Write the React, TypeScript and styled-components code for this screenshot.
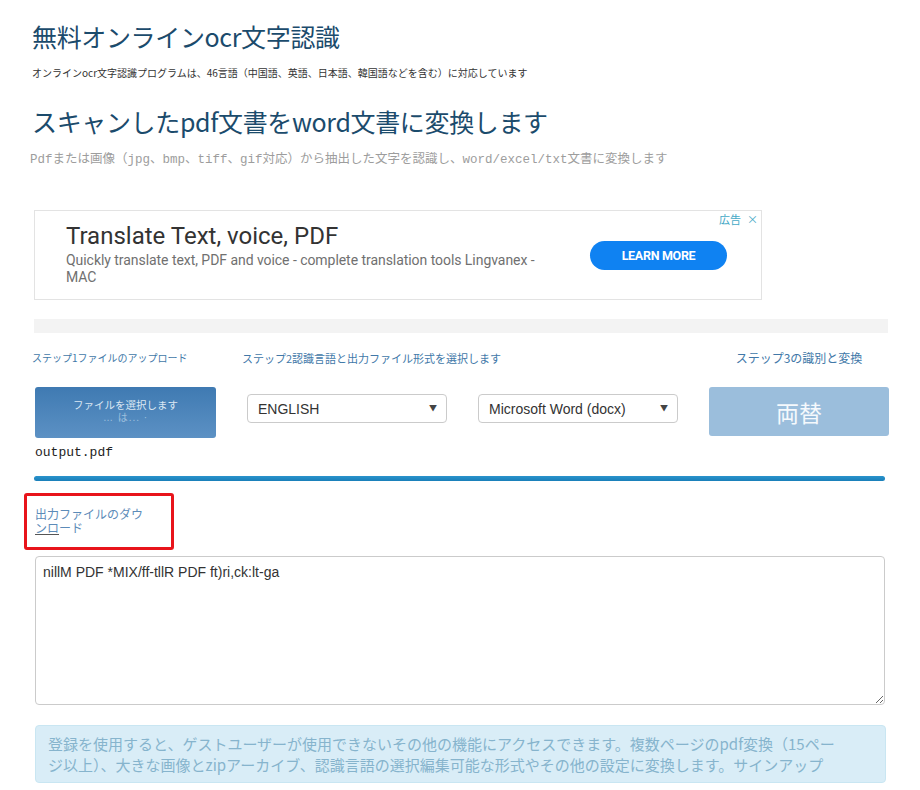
import React from "react";
import styled, { createGlobalStyle } from "styled-components";

const GlobalStyle = createGlobalStyle`
  html, body { margin: 0; padding: 0; background: #fff; }
  body { font-family: "Noto Sans CJK JP", "Noto Sans", sans-serif; color: #333; }
  * { box-sizing: border-box; }
`;

const JP = `"Noto Sans CJK JP", "Noto Sans", sans-serif`;
const TIGHT = `"Liberation Sans", "Noto Sans CJK JP", sans-serif`;

const Page = styled.div`
  width: 920px;
  padding: 22px 32px 0 34px;
  display: flex;
  flex-direction: column;
  align-items: flex-start;
`;

const Title = styled.h1<{ $gap: number }>`
  margin: ${(p) => p.$gap}px 0 0 -2px;
  font-family: ${JP};
  font-weight: 400;
  font-size: 25px;
  line-height: 28px;
  color: #1b4b6c;
  letter-spacing: -0.35px;
`;

const Lead = styled.p`
  margin: 16px 0 0 -2px;
  font-family: ${JP};
  font-size: 10px;
  line-height: 14px;
  color: #333;
`;

const Para = styled.p`
  margin: 16px 0 0 -4px;
  font-family: "Liberation Mono", ${JP};
  font-size: 12.5px;
  line-height: 18px;
  color: #9d9d9d;
`;

const Ad = styled.div`
  position: relative;
  margin-top: 41px;
  width: 728px;
  height: 90px;
  border: 1px solid #e3e3e3;
  display: flex;
  align-items: center;
  justify-content: space-between;
  padding: 0 34px 0 31px;
  background: #fff;
`;

const AdText = styled.div`
  display: flex;
  flex-direction: column;
  width: 480px;
  margin-top: -2px;
`;

const AdTitle = styled.div`
  font-family: Roboto, "Liberation Sans", sans-serif;
  font-size: 24px;
  line-height: 28px;
  color: #333;
`;

const AdDesc = styled.div`
  margin-top: 2px;
  font-family: Roboto, "Liberation Sans", sans-serif;
  font-size: 14px;
  line-height: 17px;
  color: #707070;
  letter-spacing: -0.05px;
`;

const AdButton = styled.button`
  width: 137px;
  height: 29px;
  border: none;
  border-radius: 15px;
  background: #0f82f2;
  color: #fff;
  font-family: Roboto, "Liberation Sans", sans-serif;
  font-weight: 700;
  font-size: 12.5px;
  letter-spacing: -0.3px;
  cursor: pointer;
`;

const AdBadge = styled.div`
  position: absolute;
  top: 1px;
  right: 3px;
  display: flex;
  gap: 6px;
  font-family: ${JP};
  font-size: 11px;
  line-height: 14px;
  color: #45a9c6;
`;

const GrayBar = styled.div`
  margin-top: 19px;
  width: 854px;
  height: 14px;
  background: #f3f3f3;
`;

const Steps = styled.div`
  width: 854px;
  display: grid;
  grid-template-columns: 182px 200px 200px 180px;
  column-gap: 31px;
  margin-top: 17px;
`;

const StepLabel = styled.div<{ $size: number; $col: string; $align?: string; $shift?: number }>`
  grid-column: ${(p) => p.$col};
  grid-row: 1;
  font-family: ${JP};
  font-size: ${(p) => p.$size}px;
  line-height: 16px;
  color: #4178a8;
  text-align: ${(p) => p.$align || "left"};
  margin-left: ${(p) => p.$shift || 0}px;
  white-space: nowrap;
`;

const Cell = styled.div<{ $col: number; $top: number }>`
  grid-column: ${(p) => p.$col};
  grid-row: 2;
  margin-top: ${(p) => p.$top}px;
`;

const FileButton = styled.div`
  width: 181px;
  height: 51px;
  margin-left: 1px;
  border-radius: 3px;
  background: linear-gradient(#3f7ab2, #5c91c4);
  display: flex;
  flex-direction: column;
  align-items: center;
  justify-content: center;
  padding-bottom: 3px;
  font-family: ${TIGHT};
  font-size: 10.5px;
  line-height: 13px;
  color: #dbe7f3;
`;

const FileSub = styled.span`
  color: #9fc0de;
  font-size: 10px;
  line-height: 12px;
  letter-spacing: 1px;
`;

const SelectWrap = styled.div`
  position: relative;
  width: 200px;
  height: 29px;
`;

const Select = styled.select`
  appearance: none;
  -webkit-appearance: none;
  width: 100%;
  height: 100%;
  border: 1px solid #cbcbcb;
  border-radius: 4px;
  background: #fff;
  padding: 0 24px 0 10px;
  font-family: "Liberation Sans", Arial, sans-serif;
  font-size: 14px;
  color: #333;
  outline: none;
`;

const Arrow = styled.span`
  position: absolute;
  right: 10px;
  top: 9px;
  font-size: 8px;
  line-height: 10px;
  color: #444;
  pointer-events: none;
`;

const ConvertButton = styled.button`
  width: 180px;
  height: 49px;
  border: none;
  border-radius: 3px;
  background: #9bbedc;
  color: #f5f9fd;
  font-family: ${JP};
  font-size: 23px;
  cursor: pointer;
`;

const FileName = styled.div`
  grid-column: 1 / span 2;
  grid-row: 3;
  margin: 7px 0 0 1px;
  font-family: "Liberation Mono", "Courier New", monospace;
  font-size: 13px;
  line-height: 16px;
  color: #222;
`;

const ProgressBar = styled.div`
  margin-top: 15px;
  width: 851px;
  height: 5px;
  border-radius: 3px;
  background: linear-gradient(#2a93cc, #1a7fb9);
`;

const Highlight = styled.div`
  margin: 12px 0 0 -10px;
  width: 150px;
  height: 57px;
  border: 3px solid #e8141b;
  border-radius: 3px;
  padding: 12px 0 0 8px;
`;

const DownloadLink = styled.a`
  display: block;
  width: 114px;
  font-family: ${TIGHT};
  font-size: 12px;
  line-height: 14px;
  color: #5c8bb8;
  text-decoration: none;
`;

const Focus = styled.span`
  text-decoration: underline;
  text-decoration-color: #555;
  text-underline-offset: 1px;
`;

const Output = styled.textarea`
  margin: 6px 0 0 1px;
  width: 850px;
  height: 149px;
  border: 1px solid #cbcbcb;
  border-radius: 4px;
  padding: 5px 7px;
  font-family: "Liberation Sans", Arial, sans-serif;
  font-size: 14px;
  line-height: 20px;
  color: #333;
  resize: both;
  outline: none;
`;

const Notice = styled.div`
  margin: 20px 0 0 1px;
  width: 851px;
  border: 1px solid #c9e6f2;
  border-radius: 4px;
  background: #d9edf7;
  padding: 7px 38px 7px 12px;
  font-family: ${JP};
  font-size: 15px;
  line-height: 21px;
  color: #86b4cd;
`;

export default function App() {
  return (
    <>
      <GlobalStyle />
      <Page>
        <Title $gap={0}>無料オンラインocr文字認識</Title>
        <Lead>
          オンラインocr文字認識プログラムは、46言語（中国語、英語、日本語、韓国語などを含む）に対応しています
        </Lead>
        <Title $gap={27}>スキャンしたpdf文書をword文書に変換します</Title>
        <Para>
          Pdfまたは画像（jpg、bmp、tiff、gif対応）から抽出した文字を認識し、word/excel/txt文書に変換します
        </Para>

        <Ad>
          <AdText>
            <AdTitle>Translate Text, voice, PDF</AdTitle>
            <AdDesc>
              Quickly translate text, PDF and voice - complete translation tools Lingvanex - MAC
            </AdDesc>
          </AdText>
          <AdButton>LEARN MORE</AdButton>
          <AdBadge>
            <span>広告</span>
            <span>×</span>
          </AdBadge>
        </Ad>

        <GrayBar />

        <Steps>
          <StepLabel $size={10} $col="1" $shift={-2}>
            ステップ1ファイルのアップロード
          </StepLabel>
          <StepLabel $size={11} $col="2 / span 2" $shift={-5}>
            ステップ2認識言語と出力ファイル形式を選択します
          </StepLabel>
          <StepLabel $size={12} $col="4" $align="center">
            ステップ3の識別と変換
          </StepLabel>

          <Cell $col={1} $top={21}>
            <FileButton>
              <span>ファイルを選択します</span>
              <FileSub>… は... ·</FileSub>
            </FileButton>
          </Cell>
          <Cell $col={2} $top={28}>
            <SelectWrap>
              <Select defaultValue="ENGLISH">
                <option>ENGLISH</option>
              </Select>
              <Arrow>▼</Arrow>
            </SelectWrap>
          </Cell>
          <Cell $col={3} $top={28}>
            <SelectWrap>
              <Select defaultValue="docx">
                <option value="docx">Microsoft Word (docx)</option>
              </Select>
              <Arrow>▼</Arrow>
            </SelectWrap>
          </Cell>
          <Cell $col={4} $top={21}>
            <ConvertButton>両替</ConvertButton>
          </Cell>

          <FileName>output.pdf</FileName>
        </Steps>

        <ProgressBar />

        <Highlight>
          <DownloadLink href="#">
            出力ファイルのダウ<Focus>ンロ</Focus>ード
          </DownloadLink>
        </Highlight>

        <Output defaultValue="nillM PDF *MIX/ff-tllR PDF ft)ri,ck:lt-ga" />

        <Notice>
          登録を使用すると、ゲストユーザーが使用できないその他の機能にアクセスできます。複数ページのpdf変換（15ページ以上）、大きな画像とzipアーカイブ、認識言語の選択編集可能な形式やその他の設定に変換します。サインアップ
        </Notice>
      </Page>
    </>
  );
}
